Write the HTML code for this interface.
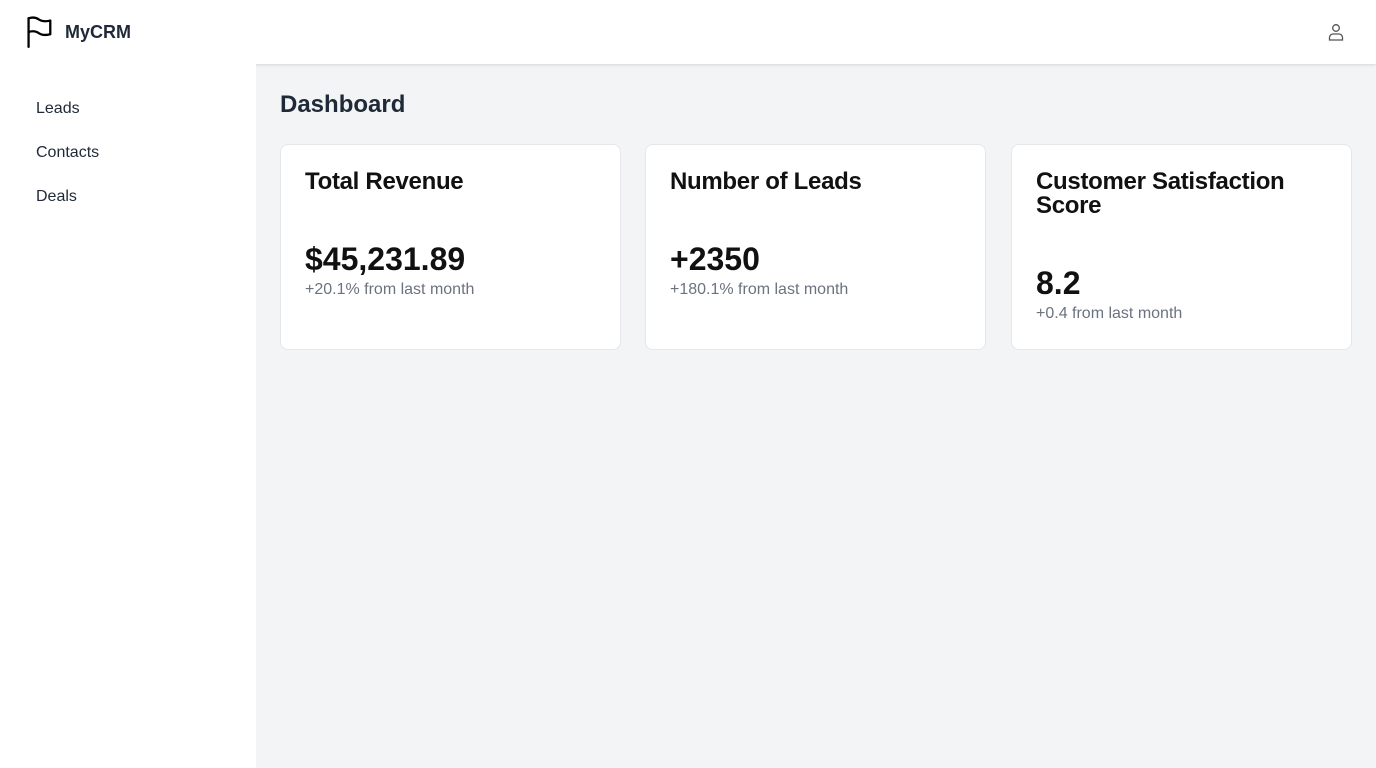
<!DOCTYPE html>
<html><head><meta charset="utf-8"><style>
*{box-sizing:border-box;margin:0;padding:0}
body{width:1376px;height:768px;overflow:hidden;font-family:"Liberation Sans",sans-serif;background:#f3f4f6;position:relative}
.header{position:absolute;left:0;top:0;width:1376px;height:64px;background:#fff;box-shadow:0 1px 3px rgba(0,0,0,.12);z-index:2}
.side{position:absolute;left:0;top:0;width:256px;height:768px;background:#fff;z-index:3}
.logo{position:absolute;left:26px;top:16px;display:flex;align-items:center}
.logo span{font-weight:bold;font-size:18px;color:#1f2937;margin-left:11px}
.nav{position:absolute;left:36px;top:100px;font-size:16px;color:#1f2937}
.nav div{height:44px}
.user{position:absolute;right:32px;top:23px;z-index:4}
h1{position:absolute;left:280px;top:91px;font-size:24px;color:#1f2937;font-weight:bold}
.card{position:absolute;top:144px;width:341px;height:206px;background:#fff;border:1px solid #e5e7eb;border-radius:8px;padding:25px 24px}
.card h2{font-size:24px;font-weight:bold;color:#111;line-height:24px;letter-spacing:-.3px}
.big{font-size:32px;font-weight:bold;color:#111;margin-top:47px;line-height:36px}
.sub{font-size:16px;color:#6b7280;margin-top:4px}
</style></head><body>
<div class="header"></div>
<div class="side">
<div class="logo"><svg width="28" height="32" viewBox="0 0 24 28" fill="none" stroke="#000" stroke-width="2" stroke-linecap="round" stroke-linejoin="round"><path d="M2 27V2"/><path d="M2 2c3-1 6-1 9 1s6 2 10 1v12c-4 1-7 1-10-1s-6-2-9-1"/></svg><span>MyCRM</span></div>
<div class="nav"><div>Leads</div><div>Contacts</div><div>Deals</div></div>
</div>
<svg class="user" width="16" height="18" viewBox="0 0 16 18" fill="none" stroke="#555" stroke-width="1.3"><circle cx="8" cy="5" r="3.3"/><path d="M1.5 17v-2.5a3.5 3.5 0 0 1 3.5-3.5h6a3.5 3.5 0 0 1 3.5 3.5V17z"/></svg>
<h1>Dashboard</h1>
<div class="card" style="left:280px"><h2>Total Revenue</h2><div class="big">$45,231.89</div><div class="sub">+20.1% from last month</div></div>
<div class="card" style="left:645px"><h2>Number of Leads</h2><div class="big">+2350</div><div class="sub">+180.1% from last month</div></div>
<div class="card" style="left:1011px"><h2>Customer Satisfaction Score</h2><div class="big">8.2</div><div class="sub">+0.4 from last month</div></div>
</body></html>
